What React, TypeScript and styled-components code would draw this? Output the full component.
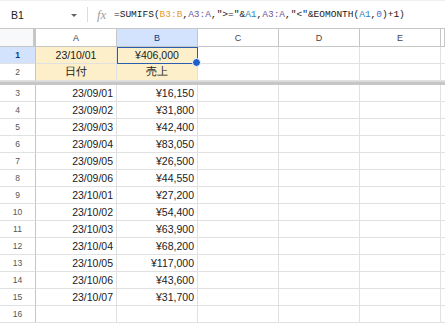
import React from "react";
import styled, { createGlobalStyle, css } from "styled-components";

const Global = createGlobalStyle`
  html, body { margin: 0; padding: 0; background: #fff; }
  body { font-family: "Liberation Sans", Arial, sans-serif; }
`;

const Page = styled.div`
  width: 445px;
  height: 323px;
  overflow: hidden;
  background: #fff;
`;

const FormulaBar = styled.div`
  display: flex;
  align-items: center;
  height: 28px;
  border-top: 1px solid #eef0f1;
  border-bottom: 1px solid #c7c7c7;
  box-sizing: border-box;
  height: 29px;
  color: #202124;
`;

const NameBox = styled.div`
  display: flex;
  align-items: center;
  justify-content: space-between;
  width: 66px;
  padding-left: 11px;
  font-size: 10.5px;
`;

const Caret = styled.span`
  width: 0;
  height: 0;
  border-left: 3px solid transparent;
  border-right: 3px solid transparent;
  border-top: 3.5px solid #5f6368;
  margin-top: 2px;
`;

const Divider = styled.div`
  width: 1px;
  height: 15px;
  background: #dadce0;
  margin-left: 10px;
`;

const Fx = styled.span`
  font-family: "Liberation Serif", serif;
  font-style: italic;
  font-size: 13px;
  color: #a0a0a0;
  margin-left: 9px;
  width: 17px;
`;

const Formula = styled.div`
  font-family: "Liberation Mono", "DejaVu Sans Mono", monospace;
  font-size: 9.5px;
  color: #202124;
  white-space: pre;
  margin-left: 0px;
`;

const Tok = styled.span<{ $c: string }>`
  color: ${(p) => p.$c};
`;

const Grid = styled.div``;

const Row = styled.div<{ $h?: number }>`
  display: grid;
  grid-template-columns: 36px 81px 81px 81px 81px 81px 1fr;
  height: ${(p) => p.$h ?? 17}px;
`;

const Corner = styled.div`
  background: #f8f9fa;
  border-right: 3px solid #c4c7c5;
  border-bottom: 1px solid #c4c7c5;
  box-sizing: border-box;
`;

const ColHead = styled.div<{ $sel?: boolean }>`
  display: flex;
  align-items: center;
  justify-content: center;
  font-size: 9px;
  color: ${(p) => (p.$sel ? "#0b3a8c" : "#444")};
  background: ${(p) => (p.$sel ? "#d3e3fd" : "#fff")};
  border-right: 1px solid #c4c7c5;
  border-bottom: 1px solid #c4c7c5;
  box-sizing: border-box;
`;

const RowHead = styled.div<{ $sel?: boolean }>`
  display: flex;
  align-items: center;
  justify-content: center;
  font-size: 8.5px;
  color: ${(p) => (p.$sel ? "#0b3a8c" : "#555")};
  font-weight: ${(p) => (p.$sel ? 700 : 400)};
  background: ${(p) => (p.$sel ? "#d3e3fd" : "#fff")};
  border-right: 1px solid #c4c7c5;
  border-bottom: 1px solid #e1e1e1;
  box-sizing: border-box;
`;

const Cell = styled.div<{ $fill?: boolean; $center?: boolean; $sel?: boolean }>`
  position: relative;
  display: flex;
  align-items: center;
  justify-content: ${(p) => (p.$center ? "center" : "flex-end")};
  padding-right: 3px;
  padding-left: 3px;
  font-size: 10.5px;
  color: #202124;
  background: ${(p) => (p.$fill ? "#fdefc9" : "#fff")};
  border-right: 1px solid #e1e1e1;
  border-bottom: 1px solid #e1e1e1;
  box-sizing: border-box;
  white-space: nowrap;
  ${(p) =>
    p.$sel &&
    css`
      outline: 1px solid #2a5db0;
      outline-offset: -1px;
      z-index: 1;
    `}
`;

const Handle = styled.span`
  position: absolute;
  right: -4px;
  bottom: -4px;
  width: 7px;
  height: 7px;
  border-radius: 50%;
  background: #1f5fc8;
  border: 1px solid #fff;
  box-sizing: content-box;
  z-index: 2;
`;

const Freeze = styled.div`
  height: 4px;
  background: #c4c7c5;
  border-top: 1px solid #d8d8d8;
  box-sizing: border-box;
`;

const data: [string, string][] = [
  ["23/09/01", "¥16,150"],
  ["23/09/02", "¥31,800"],
  ["23/09/03", "¥42,400"],
  ["23/09/04", "¥83,050"],
  ["23/09/05", "¥26,500"],
  ["23/09/06", "¥44,550"],
  ["23/10/01", "¥27,200"],
  ["23/10/02", "¥54,400"],
  ["23/10/03", "¥63,900"],
  ["23/10/04", "¥68,200"],
  ["23/10/05", "¥117,000"],
  ["23/10/06", "¥43,600"],
  ["23/10/07", "¥31,700"],
  ["", ""],
];

const ORANGE = "#e59c2c";
const PURPLE = "#6f5a9a";
const TEAL = "#2f86b8";
const NUM = "#3c6fd1";

export default function App() {
  return (
    <Page>
      <Global />
      <FormulaBar>
        <NameBox>
          B1
          <Caret />
        </NameBox>
        <Divider />
        <Fx>fx</Fx>
        <Formula>
          =SUMIFS(<Tok $c={ORANGE}>B3:B</Tok>,<Tok $c={PURPLE}>A3:A</Tok>,"&gt;="&amp;
          <Tok $c={TEAL}>A1</Tok>,<Tok $c={PURPLE}>A3:A</Tok>,"&lt;"&amp;EOMONTH(
          <Tok $c={TEAL}>A1</Tok>,<Tok $c={NUM}>0</Tok>)+1)
        </Formula>
      </FormulaBar>
      <Grid>
        <Row $h={18}>
          <Corner />
          <ColHead>A</ColHead>
          <ColHead $sel>B</ColHead>
          <ColHead>C</ColHead>
          <ColHead>D</ColHead>
          <ColHead>E</ColHead>
          <ColHead />
        </Row>
        <Row>
          <RowHead $sel>1</RowHead>
          <Cell $fill $center>23/10/01</Cell>
          <Cell $fill $center $sel>
            ¥406,000
            <Handle />
          </Cell>
          <Cell />
          <Cell />
          <Cell />
          <Cell />
        </Row>
        <Row>
          <RowHead>2</RowHead>
          <Cell $fill $center>日付</Cell>
          <Cell $fill $center>売上</Cell>
          <Cell />
          <Cell />
          <Cell />
          <Cell />
        </Row>
        <Freeze />
        {data.map(([d, v], i) => (
          <Row key={i}>
            <RowHead>{i + 3}</RowHead>
            <Cell>{d}</Cell>
            <Cell>{v}</Cell>
            <Cell />
            <Cell />
            <Cell />
            <Cell />
          </Row>
        ))}
      </Grid>
    </Page>
  );
}
